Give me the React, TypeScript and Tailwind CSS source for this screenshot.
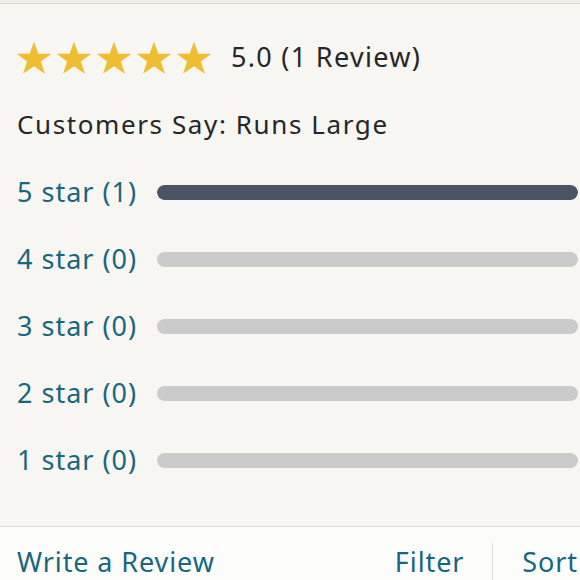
const rows = [
  { label: "5 star (1)", pct: 100 },
  { label: "4 star (0)", pct: 0 },
  { label: "3 star (0)", pct: 0 },
  { label: "2 star (0)", pct: 0 },
  { label: "1 star (0)", pct: 0 },
];

const Star = () => (
  <svg viewBox="0 0 24 24" className="w-[36px] h-[36px] -mx-[1.5px]">
    <path
      d="M12 1.8l2.95 8.1h8.6l-6.95 5.05 2.65 8.2L12 18.1l-7.25 5.05 2.65-8.2L.45 9.9h8.6z"
      fill="#eebd30"
    />
  </svg>
);

export default function App() {
  return (
    <div
      className="w-[580px] h-[580px] overflow-hidden flex flex-col bg-[#f7f6f2]"
      style={{ fontFamily: "'Noto Sans', Lato, sans-serif" }}
    >
      <div className="h-[4px] bg-[#efefe9] border-b border-[#d9d9d2] shrink-0" />

      <div className="flex-1 px-[17px]">
        <div className="flex items-center mt-[33px] h-[40px]">
          <div className="flex gap-[7px]">
            <Star />
            <Star />
            <Star />
            <Star />
            <Star />
          </div>
          <span className="ml-[21px] text-[27px] tracking-[1.3px] text-[#262626]">5.0 (1 Review)</span>
        </div>

        <div className="mt-[30px] text-[26px] tracking-[1.6px] text-[#262626] leading-[34px]">
          Customers Say: Runs Large
        </div>

        <div className="mt-[18px] flex flex-col">
          {rows.map((r) => (
            <div key={r.label} className="flex items-center h-[67px] -mr-[15px]">
              <span className="w-[140px] text-[27px] tracking-[1px] text-[#17687c]">{r.label}</span>
              <div className="flex-1 h-[15px] rounded-full bg-[#cbcbcb] overflow-hidden">
                <div className="h-full rounded-full bg-[#4a5464]" style={{ width: `${r.pct}%` }} />
              </div>
            </div>
          ))}
        </div>
      </div>

      <div className="h-[54px] shrink-0 border-t border-[#dcdcd6] bg-[#fcfcfa] flex items-end pl-[17px] text-[27px] leading-[36px] tracking-[0.9px] text-[#17687c]">
        <span>Write a Review</span>
        <span className="ml-auto pr-[28px]">Filter</span>
        <div className="self-stretch mt-[16px] w-px bg-[#e0e0da]" />
        <span className="pl-[29px] pr-[2px]">Sort</span>
      </div>
    </div>
  );
}
